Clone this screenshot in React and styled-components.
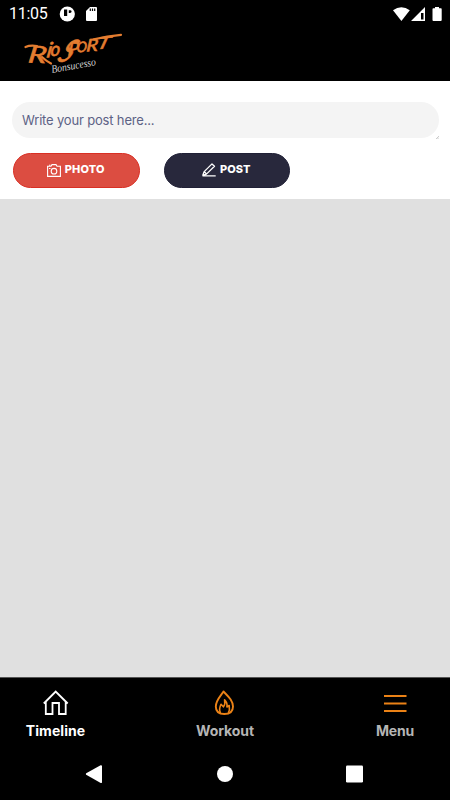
import React from "react";
import styled, { createGlobalStyle } from "styled-components";

const GlobalStyle = createGlobalStyle`
  * { box-sizing: border-box; }
  body { margin: 0; background: #000; font-family: Inter, "Open Sans", sans-serif; }
`;
const Screen = styled.div`
  width: 450px;
  height: 800px;
  display: flex;
  flex-direction: column;
  background: #e0e0e0;
  overflow: hidden;
`;
const Header = styled.header`
  height: 81px;
  background: #000;
  display: flex;
  flex-direction: column;
`;
const StatusBar = styled.div`
  height: 27px;
  display: flex;
  align-items: center;
  justify-content: space-between;
  padding: 0 8px 0 9px;
`;
const StatusGroup = styled.div`
  display: flex;
  align-items: center;
`;
const Clock = styled.span`
  width: 50px;
  font: 400 16px/19px Roboto, sans-serif;
  color: #fff;
  letter-spacing: -0.25px;
`;
const Logo = styled.svg`
  display: block;
  width: 110px;
  height: 50px;
  margin-left: 18px;
`;
const Script = styled.text`
  font-family: Lato, sans-serif;
  font-style: italic;
  font-weight: 400;
  fill: #e47d30;
  stroke: #e47d30;
  stroke-width: 0.6px;
`;
const Subtitle = styled.text`
  font: italic 400 11px "Liberation Serif", serif;
  fill: #d2d2d2;
`;
const Composer = styled.section`
  height: 118px;
  padding: 21px 11px 0 12px;
  background: #fff;
`;
const FieldRow = styled.div`
  height: 37px;
  display: flex;
  align-items: flex-end;
`;
const Field = styled.div`
  width: 427px;
  height: 36px;
  align-self: flex-start;
  flex: none;
  border-radius: 18px;
  background: #f4f4f4;
  color: #5c6285;
  font-size: 13px;
  line-height: 36px;
  padding-left: 10px;
  letter-spacing: -0.17px;
  white-space: nowrap;
`;
const Grip = styled.svg`
  flex: none;
  width: 3px;
  height: 3px;
  margin-left: -3px;
`;
const Actions = styled.div`
  display: flex;
  gap: 24px;
  padding: 14px 0 0 1px;
`;
const Pill = styled.button`
  width: 126.5px;
  height: 35px;
  border: 1px solid ${(p) => p.$edge};
  border-radius: 18px;
  background: ${(p) => p.$fill};
  color: #fff;
  display: flex;
  align-items: center;
  justify-content: center;
  gap: 4px;
  padding: 0 1px 3px 0;
  font: 800 11px/14px Inter, sans-serif;
  letter-spacing: ${(p) => p.$tracking};
  svg { margin-top: 2px; }
`;
const Feed = styled.main`
  flex: 1;
`;
const TabBar = styled.nav`
  height: 71px;
  flex: none;
  background: #000;
  border-top: 1px solid #555;
  display: grid;
  grid-template-columns: 170px 180px 38px;
  padding: 12px 0 0 26px;
`;
const Tab = styled.div`
  width: ${(p) => p.$width};
  display: flex;
  flex-direction: column;
  align-items: center;
  gap: 5px;
  color: ${(p) => (p.$active ? "#fff" : "#b5b5b5")};
  svg { display: block; flex: none; }
`;
const TabLabel = styled.span`
  font: 700 14px/20px Inter, sans-serif;
  letter-spacing: ${(p) => p.$tracking};
  white-space: nowrap;
`;
const SystemNav = styled.footer`
  height: 52px;
  flex: none;
  background: #000;
  display: flex;
  justify-content: space-between;
  padding: 17px 87px 0 85px;
  svg { display: block; }
`;

function NotificationIcons() {
  return (
    <svg width="40" height="18" viewBox="59 4 40 18">
      <circle cx="67.3" cy="13" r="7.6" fill="#fff" />
      <path d="M64 8.5H67.2V15H64ZM68.8 9.3H70Q71.6 9.3 71.6 10.6Q71.6 12 70 12H68.8Z" fill="#000" />
      <path d="M90 6H96Q97 6 97 7V19Q97 20 96 20H87Q86 20 86 19V10Z" fill="#fff" />
      <path d="M90.3 7.5V10M92.5 7.5V10M94.7 7.5V10" stroke="#000" strokeWidth="1.2" />
    </svg>
  );
}

function StatusIcons() {
  return (
    <svg width="52" height="18" viewBox="390 4 52 18" fill="#fff">
      <path d="M393 9.2Q401.4 3.2 409.8 9.2L401.4 20Z" />
      <path fillRule="evenodd" d="M425 6V20H411ZM421 12V18.5H423.5V12Z" />
      <path d="M435 6H439V7.3H441Q441.7 7.3 441.7 8.2V19Q441.7 20 440.7 20H433.4Q432.5 20 432.5 19V8.2Q432.5 7.3 433.3 7.3H435Z" />
    </svg>
  );
}

function BrandLogo() {
  return (
    <Logo viewBox="18 27 110 50" aria-label="RioSport Bonsucesso">
      <Script fontSize="23" transform="translate(27.5 62.5) rotate(2) skewX(-6) scale(1.35 1.02)">R</Script>
      <Script fontSize="21" transform="translate(46 57.5) rotate(-3) skewX(-12) scale(1.1 1)">i</Script>
      <Script fontSize="19" transform="translate(50.5 56.5) rotate(-8) skewX(-8)">o</Script>
      <Script fontSize="32" transform="translate(56 61.5) rotate(2) skewX(-28) scale(.8 .98)">S</Script>
      <Script fontSize="18" transform="translate(67.5 55.5) rotate(-4) skewX(-10) scale(1.05 1)">P</Script>
      <Script fontSize="14" transform="translate(76.5 52.5) rotate(-6) skewX(-8)">O</Script>
      <Script fontSize="17" transform="translate(86 51.5) rotate(-3) skewX(-8) scale(1.18 1)">R</Script>
      <Script fontSize="18" transform="translate(96 49.5) rotate(-6) skewX(-22) scale(1.3 .9)">T</Script>
      <g fill="none" stroke="#e47d30" strokeLinecap="round">
        <path d="M25.5 47Q30 45 37 46" strokeWidth="2.2" />
        <path d="M42 57Q46 61 51 63.5" strokeWidth="2.2" />
        <path d="M94 39.3Q107 36 121 34.8" strokeWidth="2.2" />
      </g>
      <Subtitle transform="translate(52 73) rotate(-10)" textLength="45" lengthAdjust="spacingAndGlyphs">Bonsucesso</Subtitle>
    </Logo>
  );
}

export default function App() {
  return (
    <>
      <GlobalStyle />
      <Screen>
        <Header>
          <StatusBar>
            <StatusGroup>
              <Clock>11:05</Clock>
              <NotificationIcons />
            </StatusGroup>
            <StatusIcons />
          </StatusBar>
          <BrandLogo />
        </Header>
        <Composer>
          <FieldRow>
            <Field>Write your post here...</Field>
            <Grip viewBox="0 0 3 3"><path d="M0 3L3 0M1.5 3L3 1.5" stroke="#aaa" strokeWidth=".6" /></Grip>
          </FieldRow>
          <Actions>
            <Pill $fill="#dc4d41" $edge="#d92f24" $tracking="0.2px">
              <svg width="14" height="13" viewBox="0 0 14 13" fill="none" stroke="#fff" strokeWidth="1.1">
                <path d="M.6 2.3H4L5 .6H9L10 2.3H13.4V12.4H.6Z" />
                <circle cx="7" cy="7.2" r="2.8" />
                <path d="M2 4.5H3.5M2 1.2H3.5" />
              </svg>
              PHOTO
            </Pill>
            <Pill $fill="#28283c" $edge="#202036" $tracking="0px">
              <svg width="14" height="14" viewBox="0 0 14 14" fill="none" stroke="#fff" strokeWidth="1.3" strokeLinejoin="round">
                <path d="M.8 12.3L2.2 8.6L10 .9L12.5 3.2L4.4 11.1L.8 12.3ZM2.4 8.7L4.5 11M.5 12.8H13.7" />
              </svg>
              POST
            </Pill>
          </Actions>
        </Composer>
        <Feed />
        <TabBar>
          <Tab $active $width="59px">
            <svg width="26" height="26" viewBox="0 0 26 26" fill="none" stroke="#fff" strokeWidth="1.8">
              <path d="M.8 13.5L12.7 1.5L24.7 13.5M2.8 11.5V24H9.5V13H16V24H22.7V11.5" />
            </svg>
            <TabLabel $tracking="0.05px">Timeline</TabLabel>
          </Tab>
          <Tab $width="58px">
            <svg width="26" height="26" viewBox="0 0 26 26" fill="none" stroke="#eb8216" strokeWidth="1.9" strokeLinejoin="round">
              <path d="M11.5 1.5C8.5 6 3.8 10.5 3.8 16.5C3.8 21.5 7 24 12.3 24C17.8 24 21 21.5 21 16.5C21 10.5 16.3 6.5 11.5 1.5Z" />
              <path d="M8.5 23C7 20 7.3 17.5 9 14.3L11.4 16.8C13.2 14.5 13.2 12.5 12.6 9.8C15 12 15.4 14.2 14.9 17L17.2 15.5C17.9 19 17.4 21 16.2 23" strokeWidth="1.6" />
            </svg>
            <TabLabel $tracking="-0.1px">Workout</TabLabel>
          </Tab>
          <Tab $width="38px">
            <svg width="24" height="26" viewBox="0 0 24 26" stroke="#eb8216" strokeWidth="2">
              <path d="M1 6H23.5M1 13.5H23.5M1 21H23.5" />
            </svg>
            <TabLabel $tracking="-0.2px">Menu</TabLabel>
          </Tab>
        </TabBar>
        <SystemNav>
          <svg width="17" height="18" viewBox="0 0 17 18" fill="#fff"><path d="M1.2 8.2L15.6.2Q17 0 17 1V17Q17 18.4 15.7 18L1.2 9.8Q.5 9 1.2 8.2Z" /></svg>
          <svg width="17" height="18" viewBox="0 0 17 18" fill="#fff"><circle cx="9" cy="9" r="8" /></svg>
          <svg width="17" height="18" viewBox="0 0 17 18" fill="#fff"><rect y=".5" width="17" height="17" rx="1.2" /></svg>
        </SystemNav>
      </Screen>
    </>
  );
}
